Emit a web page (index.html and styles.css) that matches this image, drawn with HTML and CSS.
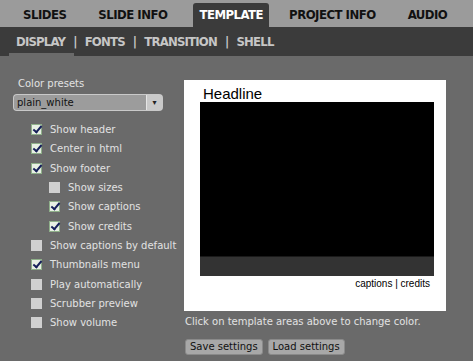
FILE: index.html
```html
<!DOCTYPE html>
<html lang="en">
<head>
    <meta charset="UTF-8">
    <title>Template - Display</title>
    <link rel="stylesheet" href="styles.css">
</head>
<body>
    <div class="tabs">
        <span class="tab">SLIDES</span>
        <span class="tab">SLIDE INFO</span>
        <span class="tab active">TEMPLATE</span>
        <span class="tab">PROJECT INFO</span>
        <span class="tab">AUDIO</span>
    </div>
    <div class="subtabs">
        <span class="subtab active">DISPLAY</span>
        <span class="sep">|</span>
        <span class="subtab">FONTS</span>
        <span class="sep">|</span>
        <span class="subtab">TRANSITION</span>
        <span class="sep">|</span>
        <span class="subtab">SHELL</span>
    </div>

    <div class="main">
        <div class="settings">
            <div class="label">Color presets</div>
            <div class="select">
                <span class="select-value">plain_white</span>
                <span class="select-btn">&#9662;</span>
            </div>
            <div class="options">
                <div class="opt"><span class="box checked"></span>Show header</div>
                <div class="opt"><span class="box checked"></span>Center in html</div>
                <div class="opt"><span class="box checked"></span>Show footer</div>
                <div class="opt sub"><span class="box"></span>Show sizes</div>
                <div class="opt sub"><span class="box checked"></span>Show captions</div>
                <div class="opt sub"><span class="box checked"></span>Show credits</div>
                <div class="opt"><span class="box"></span>Show captions by default</div>
                <div class="opt"><span class="box checked"></span>Thumbnails menu</div>
                <div class="opt"><span class="box"></span>Play automatically</div>
                <div class="opt"><span class="box"></span>Scrubber preview</div>
                <div class="opt"><span class="box"></span>Show volume</div>
            </div>
        </div>

        <div class="preview-col">
            <div class="preview">
                <div class="headline">Headline</div>
                <div class="stage">
                    <div class="screen"></div>
                    <div class="footer-bar"></div>
                </div>
                <div class="credits">captions | credits</div>
            </div>
            <p class="hint">Click on template areas above to change color.</p>
            <div class="buttons">
                <button class="btn">Save settings</button>
                <button class="btn">Load settings</button>
            </div>
        </div>
    </div>
</body>
</html>
```

FILE: styles.css
```css
body {
    margin: 0;
    background: #6a6a6a;
    font-family: "DejaVu Sans", sans-serif;
    font-size: 10px;
    color: #e2e2e2;
    width: 473px;
    height: 361px;
    overflow: hidden;
}
.tabs {
    display: flex;
    align-items: flex-end;
    height: 27px;
    background: #9b9b9b;
    padding-left: 17px;
    font-family: "DejaVu Sans Condensed", sans-serif;
    font-weight: bold;
    font-size: 13px;
    letter-spacing: -0.5px;
    color: #111;
    white-space: nowrap;
}
.tab {
    height: 24px;
    line-height: 24px;
    padding: 0 6px;
    margin-right: 20px;
}
.tab.active {
    background: #3b3b3b;
    color: #fff;
    border-radius: 3px 3px 0 0;
    margin-right: 14px;
}
.subtabs {
    display: flex;
    align-items: center;
    height: 29px;
    background: #3b3b3b;
    padding-left: 16px;
    font-family: "DejaVu Sans Condensed", sans-serif;
    font-weight: bold;
    font-size: 13px;
    letter-spacing: -0.8px;
    color: #c6c6c6;
    position: relative;
    white-space: nowrap;
}
.sep {
    margin: 0 8px;
}
.subtab.active::after {
    content: "";
    position: absolute;
    left: 9px;
    bottom: 0;
    width: 65px;
    height: 3px;
    background: #6a6a6a;
}
.main {
    display: grid;
    grid-template-columns: 171px 1fr;
}
.settings {
    padding: 22px 0 0 13px;
}
.label {
    padding-left: 5px;
    height: 16px;
}
.select {
    display: flex;
    width: 150px;
    height: 17px;
    background: #c9c9c9;
    border-radius: 4px;
    box-sizing: border-box;
    padding: 1px;
}
.select-value {
    flex: 1;
    background: #9c9c9c;
    color: #111;
    line-height: 15px;
    padding-left: 3px;
    border-radius: 3px 0 0 3px;
    border-right: 1px solid #e5e5e5;
}
.select-btn {
    width: 15px;
    text-align: center;
    color: #222;
    font-size: 8px;
    line-height: 15px;
}
.options {
    padding-top: 9px;
}
.opt {
    display: flex;
    align-items: center;
    height: 19.3px;
    padding-left: 18px;
    white-space: nowrap;
}
.opt.sub {
    padding-left: 36px;
}
.box {
    flex-shrink: 0;
    width: 11px;
    height: 11px;
    background: #d0d0d0;
    margin-right: 8px;
    box-sizing: border-box;
    position: relative;
}
.box.checked {
    background: #e8f0e4;
    border: 1px solid #8fb08a;
}
.box.checked::after {
    content: "";
    position: absolute;
    left: 3px;
    top: -1px;
    width: 3px;
    height: 7px;
    border: solid #16205a;
    border-width: 0 2px 2px 0;
    transform: rotate(40deg);
}
.preview-col {
    padding: 24px 0 0 13px;
}
.preview {
    width: 262px;
    height: 231px;
    background: #fff;
    box-sizing: border-box;
    padding: 5px 12px 0 16px;
}
.headline {
    font-family: "Liberation Sans", Arial, sans-serif;
    font-size: 15px;
    color: #000;
    padding-left: 3px;
    line-height: 17px;
}
.stage {
    width: 234px;
    height: 174px;
    display: flex;
    flex-direction: column;
}
.screen {
    flex: 1;
    background: #000;
}
.footer-bar {
    height: 19px;
    background: #333;
    border-top: 1px solid #1a1a1a;
}
.credits {
    font-family: "Liberation Sans", Arial, sans-serif;
    font-size: 10px;
    color: #000;
    text-align: right;
    width: 230px;
    padding-top: 2px;
}
.hint {
    margin: 5px 0 0 1px;
}
.buttons {
    display: flex;
    gap: 5px;
    margin-top: 12px;
    padding-left: 1px;
}
.btn {
    font-family: "DejaVu Sans", sans-serif;
    font-size: 10px;
    color: #111;
    background: #a8a8a8;
    border: 1px solid #8a8a8a;
    border-radius: 3px;
    height: 16px;
    padding: 0 4px;
    line-height: 14px;
}
```
